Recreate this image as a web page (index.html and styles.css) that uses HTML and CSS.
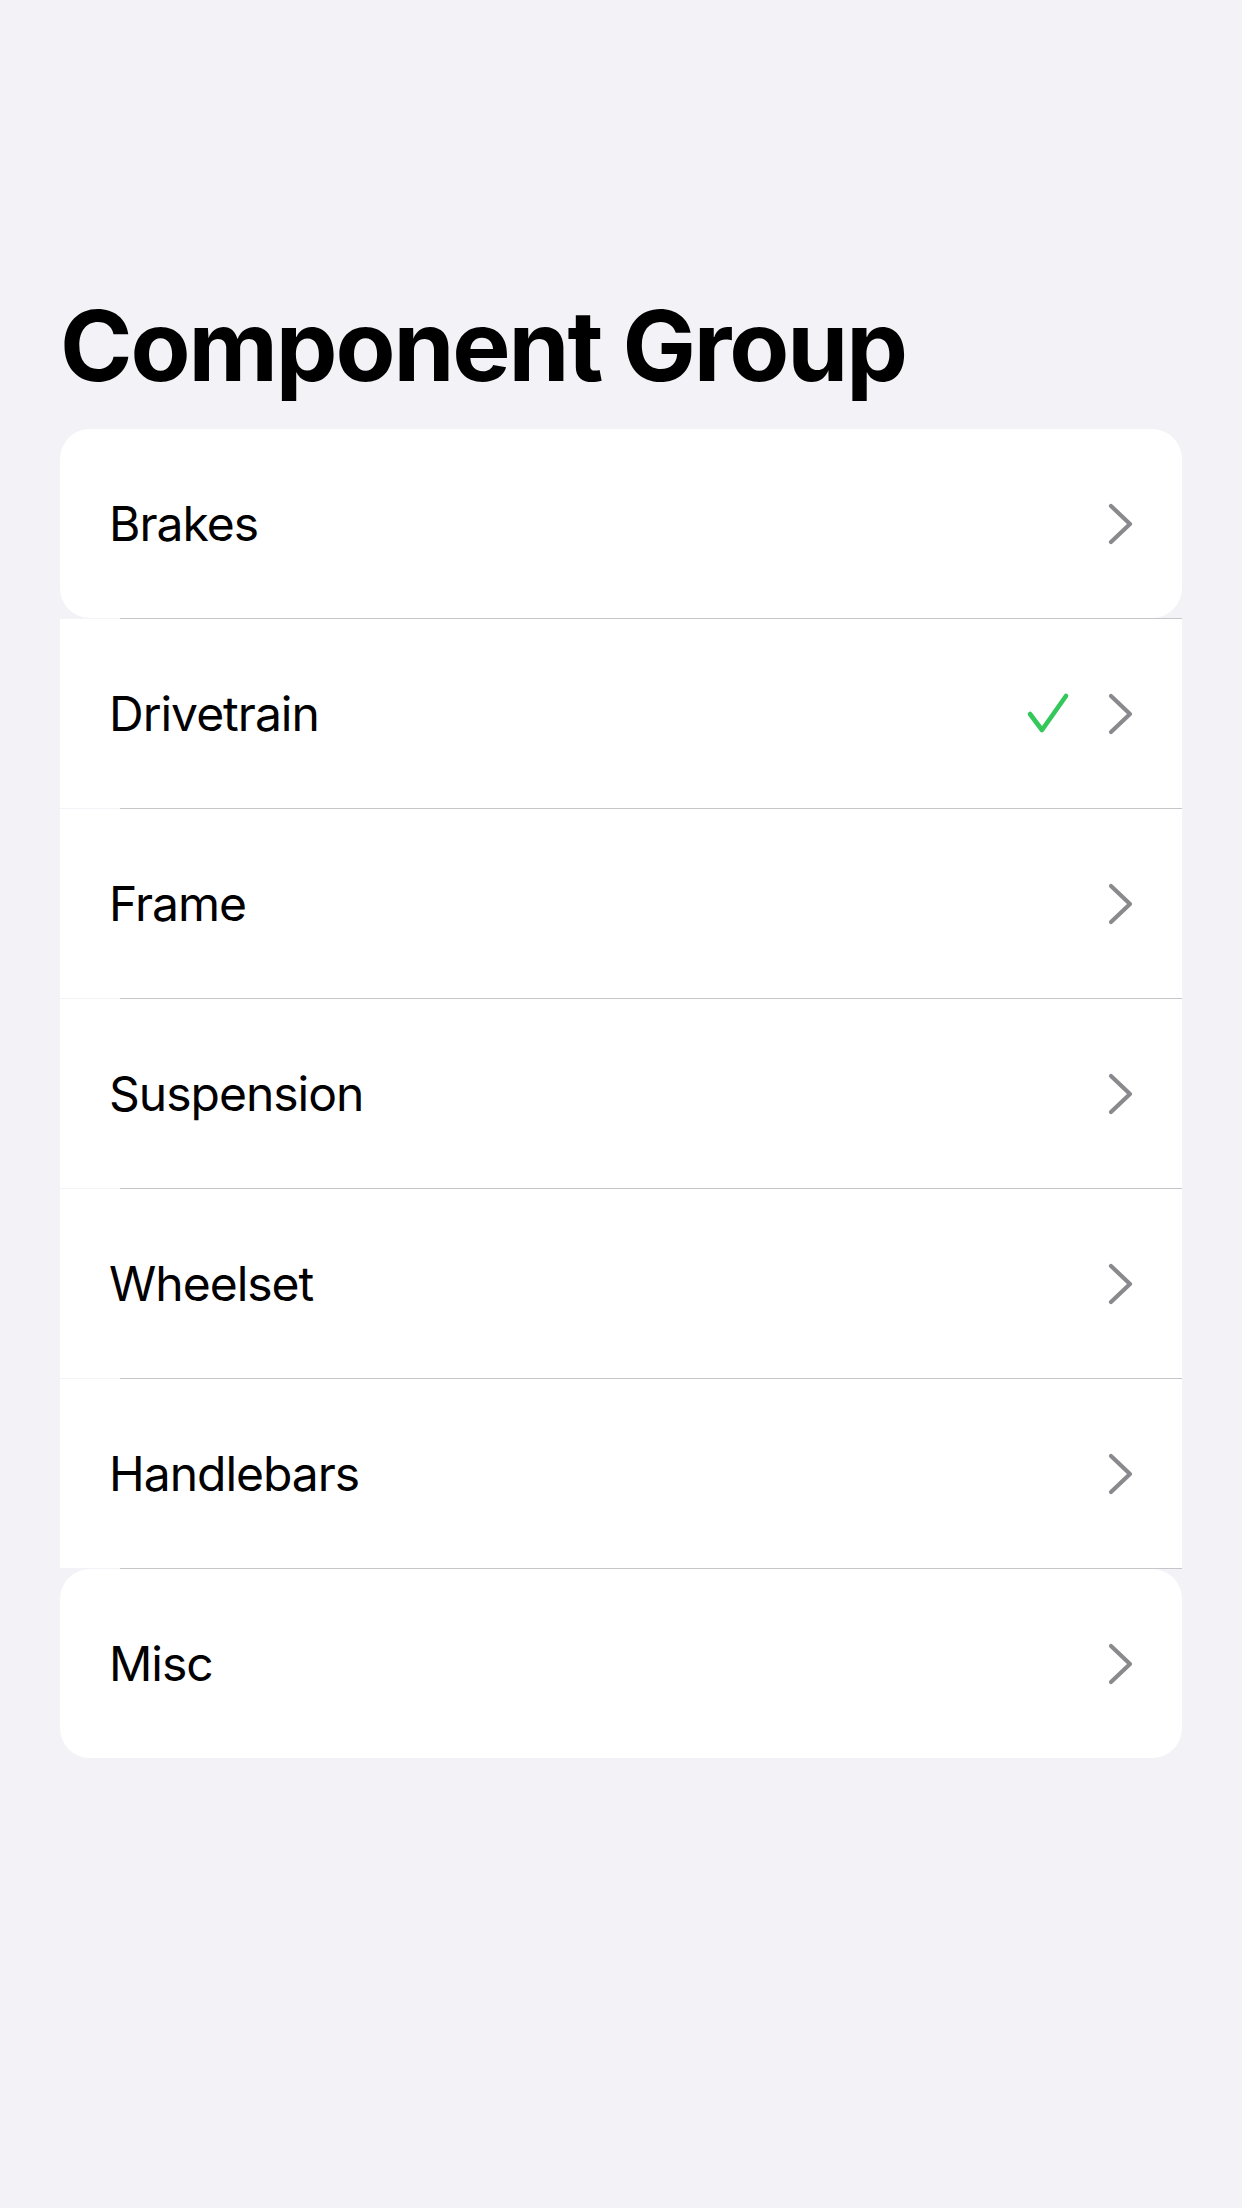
FILE: index.html
```html
<!DOCTYPE html>
<html lang="en">
<head>
<meta charset="utf-8">
<title>Component Group</title>
<link rel="stylesheet" href="styles.css">
</head>
<body>
<main class="screen">
  <h1 class="title">Component Group</h1>
  <div class="list">
    <div class="row row-first"><span class="label">Brakes</span><span class="accessories"><svg class="chevron" viewBox="0 0 26 42"><path d="M3 3 L22 21 L3 39"/></svg></span></div>
    <div class="sep"></div>
    <div class="row"><span class="label">Drivetrain</span><span class="accessories"><svg class="check" viewBox="0 0 44 44"><path d="M4 22 L16 38 L40 4"/></svg><svg class="chevron" viewBox="0 0 26 42"><path d="M3 3 L22 21 L3 39"/></svg></span></div>
    <div class="sep"></div>
    <div class="row"><span class="label">Frame</span><span class="accessories"><svg class="chevron" viewBox="0 0 26 42"><path d="M3 3 L22 21 L3 39"/></svg></span></div>
    <div class="sep"></div>
    <div class="row"><span class="label">Suspension</span><span class="accessories"><svg class="chevron" viewBox="0 0 26 42"><path d="M3 3 L22 21 L3 39"/></svg></span></div>
    <div class="sep"></div>
    <div class="row"><span class="label">Wheelset</span><span class="accessories"><svg class="chevron" viewBox="0 0 26 42"><path d="M3 3 L22 21 L3 39"/></svg></span></div>
    <div class="sep"></div>
    <div class="row"><span class="label">Handlebars</span><span class="accessories"><svg class="chevron" viewBox="0 0 26 42"><path d="M3 3 L22 21 L3 39"/></svg></span></div>
    <div class="sep"></div>
    <div class="row row-last"><span class="label">Misc</span><span class="accessories"><svg class="chevron" viewBox="0 0 26 42"><path d="M3 3 L22 21 L3 39"/></svg></span></div>
  </div>
</main>
</body>
</html>
```

FILE: styles.css
```css
html, body {
  margin: 0;
  padding: 0;
  background: #f2f2f7;
}
body {
  font-family: Inter, "Noto Sans", "Liberation Sans", sans-serif;
  color: #000;
}
.screen {
  width: 1242px;
  min-height: 2208px;
  box-sizing: border-box;
  padding: 286px 60px 0 60px;
}
.title {
  margin: 0 0 23px 0;
  font-size: 98px;
  line-height: 120px;
  font-weight: 700;
  letter-spacing: -2.1px;
}
.list {
  display: flex;
  flex-direction: column;
}
.row {
  height: 189px;
  background: #fff;
  display: flex;
  align-items: center;
  justify-content: space-between;
  padding: 0 48px 0 49px;
}
.row-first, .row-last {
  border-radius: 30px;
}
.sep {
  height: 1px;
  margin-left: 60px;
  background: #c6c6c8;
}
.label {
  font-size: 48px;
  font-weight: 400;
  letter-spacing: -1px;
}
.accessories {
  display: flex;
  align-items: center;
  gap: 38px;
}
.chevron {
  width: 26px;
  height: 42px;
  fill: none;
  stroke: #8a8a8e;
  stroke-width: 4.2;
  stroke-linecap: round;
  stroke-linejoin: round;
}
.check {
  width: 44px;
  height: 44px;
  fill: none;
  stroke: #34c759;
  stroke-width: 4.6;
  stroke-linecap: round;
  stroke-linejoin: round;
}
```
